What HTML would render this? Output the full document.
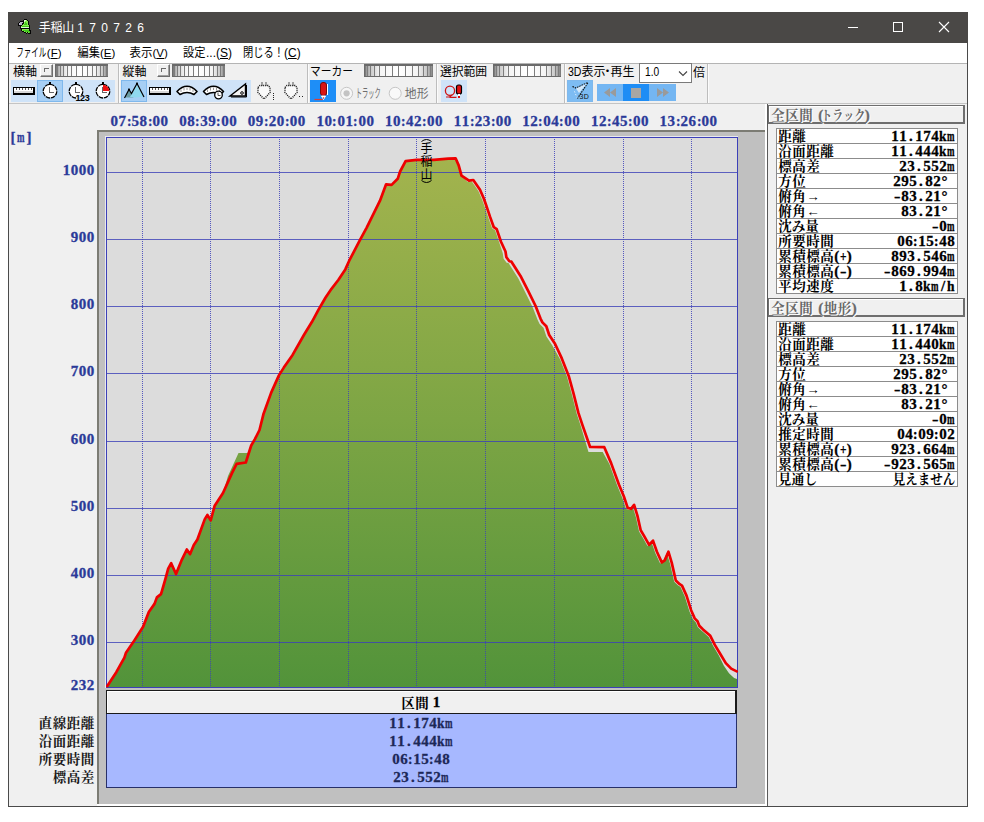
<!DOCTYPE html><html lang="ja"><head><meta charset="utf-8"><title>手稲山170726</title><style>
html,body{margin:0;padding:0;background:#fff}
body{width:984px;height:822px;position:relative;overflow:hidden;font-family:"Liberation Sans",sans-serif}
body>div{position:absolute}
.mono{white-space:nowrap;height:0;line-height:normal;-webkit-text-stroke:.3px}
.mono i{position:absolute;top:0;font-style:normal;display:block;transform-origin:0 0}
.lt{white-space:nowrap;line-height:normal}
svg.ov{position:absolute;left:0;top:0;pointer-events:none}
</style></head><body>
<div style="left:8px;top:12px;width:960px;height:795px;background:#f0f0f0;border:1px solid #4a4a4a;box-sizing:border-box"></div>
<div style="left:8px;top:12px;width:960px;height:31px;background:#4a4846"></div>
<div style="left:9px;top:43px;width:958px;height:20px;background:#fff"></div>
<div style="left:9px;top:63px;width:958px;height:41px;background:#f0f0f0;border-top:1px solid #b4b4b4;border-bottom:1px solid #c4c4c4;box-sizing:border-box"></div>
<div style="left:118px;top:64px;width:1px;height:39px;background:#bdbdbd"></div>
<div style="left:119px;top:64px;width:1px;height:39px;background:#fbfbfb"></div>
<div style="left:307px;top:64px;width:1px;height:39px;background:#bdbdbd"></div>
<div style="left:308px;top:64px;width:1px;height:39px;background:#fbfbfb"></div>
<div style="left:436px;top:64px;width:1px;height:39px;background:#bdbdbd"></div>
<div style="left:437px;top:64px;width:1px;height:39px;background:#fbfbfb"></div>
<div style="left:564px;top:64px;width:1px;height:39px;background:#bdbdbd"></div>
<div style="left:565px;top:64px;width:1px;height:39px;background:#fbfbfb"></div>
<div style="left:707px;top:64px;width:1px;height:39px;background:#bdbdbd"></div>
<div style="left:708px;top:64px;width:1px;height:39px;background:#fbfbfb"></div>
<div style="left:40px;top:64px;width:13px;height:13px;background:#f0f0f0;border:1px solid;border-color:#fff #6d6d6d #6d6d6d #fff;box-shadow:inset -1px -1px 0 #a0a0a0;box-sizing:border-box"></div>
<div style="left:55px;top:64px;width:53px;height:13px;background:linear-gradient(90deg,#8a8a8a 0,#c8c8c8 8%,#f4f4f4 22%,#fff 50%,#f4f4f4 78%,#c8c8c8 92%,#8a8a8a 100%);border:1px solid #6a6a6a;border-top:2px solid #6a6a6a;box-sizing:border-box"></div>
<div style="left:157px;top:64px;width:13px;height:13px;background:#f0f0f0;border:1px solid;border-color:#fff #6d6d6d #6d6d6d #fff;box-shadow:inset -1px -1px 0 #a0a0a0;box-sizing:border-box"></div>
<div style="left:172px;top:64px;width:53px;height:13px;background:linear-gradient(90deg,#8a8a8a 0,#c8c8c8 8%,#f4f4f4 22%,#fff 50%,#f4f4f4 78%,#c8c8c8 92%,#8a8a8a 100%);border:1px solid #6a6a6a;border-top:2px solid #6a6a6a;box-sizing:border-box"></div>
<div style="left:364px;top:64px;width:69px;height:13px;background:linear-gradient(90deg,#8a8a8a 0,#c8c8c8 8%,#f4f4f4 22%,#fff 50%,#f4f4f4 78%,#c8c8c8 92%,#8a8a8a 100%);border:1px solid #6a6a6a;border-top:2px solid #6a6a6a;box-sizing:border-box"></div>
<div style="left:493px;top:64px;width:68px;height:13px;background:linear-gradient(90deg,#8a8a8a 0,#c8c8c8 8%,#f4f4f4 22%,#fff 50%,#f4f4f4 78%,#c8c8c8 92%,#8a8a8a 100%);border:1px solid #6a6a6a;border-top:2px solid #6a6a6a;box-sizing:border-box"></div>
<div style="left:639px;top:63px;width:53px;height:20px;background:#fff;border:1px solid #7a7a7a;box-sizing:border-box"></div>
<div style="left:11px;top:80px;width:26px;height:22px;background:#cfe3f8;"></div>
<div style="left:37px;top:80px;width:26px;height:22px;background:#a6cff5;border:1px solid #7fb8ec;box-sizing:border-box;"></div>
<div style="left:63px;top:80px;width:26px;height:22px;background:#cfe3f8;"></div>
<div style="left:89px;top:80px;width:26px;height:22px;background:#cfe3f8;"></div>
<div style="left:121px;top:80px;width:26px;height:22px;background:#a6cff5;border:1px solid #7fb8ec;box-sizing:border-box;"></div>
<div style="left:147px;top:80px;width:26px;height:22px;background:#cfe3f8;"></div>
<div style="left:173px;top:80px;width:26px;height:22px;background:#cfe3f8;"></div>
<div style="left:199px;top:80px;width:26px;height:22px;background:#cfe3f8;"></div>
<div style="left:225px;top:80px;width:26px;height:22px;background:#cfe3f8;"></div>
<div style="left:310px;top:80px;width:26px;height:22px;background:#1e8ef7;"></div>
<div style="left:441px;top:80px;width:26px;height:22px;background:#cfe3f8;"></div>
<div style="left:567px;top:80px;width:26px;height:22px;background:#7dbcf3;border:1px solid #7fb8ec;box-sizing:border-box;"></div>
<div style="left:597px;top:84px;width:26px;height:17px;background:#74b6f2"></div>
<div style="left:623px;top:84px;width:26px;height:17px;background:#1e8df5"></div>
<div style="left:649px;top:84px;width:27px;height:17px;background:#74b6f2"></div>
<div style="left:97px;top:130px;width:668px;height:674px;background:#c0c0c0;border-left:2px solid #7c7c74;border-top:2px solid #7c7c74;box-sizing:border-box"></div>
<div style="left:765px;top:104px;width:2px;height:702px;background:#fff"></div>
<div style="left:767px;top:104px;width:1px;height:702px;background:#5a5a5a"></div>
<div style="left:97px;top:804px;width:668px;height:2px;background:#fff"></div>
<div style="left:105px;top:136px;width:633px;height:552px;background:#e9e9ef"></div>
<div style="left:106px;top:137px;width:632px;height:551px;background:#dcdcdc"></div>
<div style="left:106px;top:690px;width:631px;height:24px;background:#f0f0f0;border:1px solid #1a1a1a;border-right:2px solid #1a1a1a;box-sizing:border-box;box-shadow:inset 1px 1px 0 #fff"></div>
<div style="left:106px;top:714px;width:631px;height:74px;background:#a7b8ff;border:1px solid #27306a;border-top:none;box-sizing:border-box"></div>
<div style="left:768px;top:105px;width:197px;height:19px;border:1px solid #6e6e6e;border-right-width:2px;border-bottom-width:2px;box-sizing:border-box;box-shadow:inset 1px 1px 0 #fff"></div>
<div style="left:768px;top:298px;width:197px;height:19px;border:1px solid #6e6e6e;border-right-width:2px;border-bottom-width:2px;box-sizing:border-box;box-shadow:inset 1px 1px 0 #fff"></div>
<div style="left:776px;top:128px;width:182px;height:166px;background:#fff;border:1px solid #8c8c8c;box-sizing:border-box"></div>
<div style="left:777px;top:143px;width:180px;height:1px;background:#8c8c8c"></div>
<div style="left:777px;top:158px;width:180px;height:1px;background:#8c8c8c"></div>
<div style="left:777px;top:173px;width:180px;height:1px;background:#8c8c8c"></div>
<div style="left:777px;top:188px;width:180px;height:1px;background:#8c8c8c"></div>
<div style="left:777px;top:203px;width:180px;height:1px;background:#8c8c8c"></div>
<div style="left:777px;top:218px;width:180px;height:1px;background:#8c8c8c"></div>
<div style="left:777px;top:233px;width:180px;height:1px;background:#8c8c8c"></div>
<div style="left:777px;top:248px;width:180px;height:1px;background:#8c8c8c"></div>
<div style="left:777px;top:263px;width:180px;height:1px;background:#8c8c8c"></div>
<div style="left:777px;top:278px;width:180px;height:1px;background:#8c8c8c"></div>
<div style="left:776px;top:321px;width:182px;height:166px;background:#fff;border:1px solid #8c8c8c;box-sizing:border-box"></div>
<div style="left:777px;top:336px;width:180px;height:1px;background:#8c8c8c"></div>
<div style="left:777px;top:351px;width:180px;height:1px;background:#8c8c8c"></div>
<div style="left:777px;top:366px;width:180px;height:1px;background:#8c8c8c"></div>
<div style="left:777px;top:381px;width:180px;height:1px;background:#8c8c8c"></div>
<div style="left:777px;top:396px;width:180px;height:1px;background:#8c8c8c"></div>
<div style="left:777px;top:411px;width:180px;height:1px;background:#8c8c8c"></div>
<div style="left:777px;top:426px;width:180px;height:1px;background:#8c8c8c"></div>
<div style="left:777px;top:441px;width:180px;height:1px;background:#8c8c8c"></div>
<div style="left:777px;top:456px;width:180px;height:1px;background:#8c8c8c"></div>
<div style="left:777px;top:471px;width:180px;height:1px;background:#8c8c8c"></div>
<svg class="ov" width="984" height="822" viewBox="0 0 984 822"><g stroke="#fff" stroke-width="1" fill="none" shape-rendering="crispEdges"><path d="M848 27.5H858"/><rect x="893.5" y="22.5" width="9" height="9"/></g><path d="M939 22L949 32M949 22L939 32" stroke="#fff" stroke-width="1.1" fill="none"/>
<g shape-rendering="crispEdges"><rect x="24" y="19" width="1" height="1" fill="#050505"/><rect x="25" y="19" width="1" height="1" fill="#050505"/><rect x="26" y="19" width="1" height="1" fill="#050505"/><rect x="23" y="20" width="1" height="1" fill="#050505"/><rect x="24" y="20" width="1" height="1" fill="#dcffd0"/><rect x="25" y="20" width="1" height="1" fill="#dcffd0"/><rect x="26" y="20" width="1" height="1" fill="#86ec4c"/><rect x="27" y="20" width="1" height="1" fill="#050505"/><rect x="20" y="21" width="1" height="1" fill="#050505"/><rect x="21" y="21" width="1" height="1" fill="#050505"/><rect x="22" y="21" width="1" height="1" fill="#050505"/><rect x="23" y="21" width="1" height="1" fill="#050505"/><rect x="24" y="21" width="1" height="1" fill="#dcffd0"/><rect x="25" y="21" width="1" height="1" fill="#86ec4c"/><rect x="26" y="21" width="1" height="1" fill="#86ec4c"/><rect x="27" y="21" width="1" height="1" fill="#86ec4c"/><rect x="28" y="21" width="1" height="1" fill="#050505"/><rect x="19" y="22" width="1" height="1" fill="#050505"/><rect x="20" y="22" width="1" height="1" fill="#b9b4c8"/><rect x="21" y="22" width="1" height="1" fill="#b9b4c8"/><rect x="22" y="22" width="1" height="1" fill="#b9b4c8"/><rect x="23" y="22" width="1" height="1" fill="#050505"/><rect x="24" y="22" width="1" height="1" fill="#86ec4c"/><rect x="25" y="22" width="1" height="1" fill="#43c81e"/><rect x="26" y="22" width="1" height="1" fill="#86ec4c"/><rect x="27" y="22" width="1" height="1" fill="#86ec4c"/><rect x="28" y="22" width="1" height="1" fill="#050505"/><rect x="18" y="23" width="1" height="1" fill="#050505"/><rect x="19" y="23" width="1" height="1" fill="#b9b4c8"/><rect x="20" y="23" width="1" height="1" fill="#b9b4c8"/><rect x="21" y="23" width="1" height="1" fill="#b9b4c8"/><rect x="22" y="23" width="1" height="1" fill="#050505"/><rect x="23" y="23" width="1" height="1" fill="#050505"/><rect x="24" y="23" width="1" height="1" fill="#86ec4c"/><rect x="25" y="23" width="1" height="1" fill="#43c81e"/><rect x="26" y="23" width="1" height="1" fill="#43c81e"/><rect x="27" y="23" width="1" height="1" fill="#86ec4c"/><rect x="28" y="23" width="1" height="1" fill="#050505"/><rect x="18" y="24" width="1" height="1" fill="#050505"/><rect x="19" y="24" width="1" height="1" fill="#b9b4c8"/><rect x="20" y="24" width="1" height="1" fill="#b9b4c8"/><rect x="21" y="24" width="1" height="1" fill="#b9b4c8"/><rect x="22" y="24" width="1" height="1" fill="#050505"/><rect x="23" y="24" width="1" height="1" fill="#86ec4c"/><rect x="24" y="24" width="1" height="1" fill="#43c81e"/><rect x="25" y="24" width="1" height="1" fill="#43c81e"/><rect x="26" y="24" width="1" height="1" fill="#43c81e"/><rect x="27" y="24" width="1" height="1" fill="#86ec4c"/><rect x="28" y="24" width="1" height="1" fill="#050505"/><rect x="18" y="25" width="1" height="1" fill="#050505"/><rect x="19" y="25" width="1" height="1" fill="#050505"/><rect x="20" y="25" width="1" height="1" fill="#050505"/><rect x="21" y="25" width="1" height="1" fill="#050505"/><rect x="22" y="25" width="1" height="1" fill="#86ec4c"/><rect x="23" y="25" width="1" height="1" fill="#86ec4c"/><rect x="24" y="25" width="1" height="1" fill="#86ec4c"/><rect x="25" y="25" width="1" height="1" fill="#86ec4c"/><rect x="26" y="25" width="1" height="1" fill="#86ec4c"/><rect x="27" y="25" width="1" height="1" fill="#86ec4c"/><rect x="28" y="25" width="1" height="1" fill="#86ec4c"/><rect x="29" y="25" width="1" height="1" fill="#050505"/><rect x="20" y="26" width="1" height="1" fill="#050505"/><rect x="21" y="26" width="1" height="1" fill="#86ec4c"/><rect x="22" y="26" width="1" height="1" fill="#43c81e"/><rect x="23" y="26" width="1" height="1" fill="#43c81e"/><rect x="24" y="26" width="1" height="1" fill="#43c81e"/><rect x="25" y="26" width="1" height="1" fill="#43c81e"/><rect x="26" y="26" width="1" height="1" fill="#43c81e"/><rect x="27" y="26" width="1" height="1" fill="#43c81e"/><rect x="28" y="26" width="1" height="1" fill="#43c81e"/><rect x="29" y="26" width="1" height="1" fill="#050505"/><rect x="20" y="27" width="1" height="1" fill="#050505"/><rect x="21" y="27" width="1" height="1" fill="#dcffd0"/><rect x="22" y="27" width="1" height="1" fill="#dcffd0"/><rect x="23" y="27" width="1" height="1" fill="#dcffd0"/><rect x="24" y="27" width="1" height="1" fill="#dcffd0"/><rect x="25" y="27" width="1" height="1" fill="#dcffd0"/><rect x="26" y="27" width="1" height="1" fill="#dcffd0"/><rect x="27" y="27" width="1" height="1" fill="#dcffd0"/><rect x="28" y="27" width="1" height="1" fill="#dcffd0"/><rect x="29" y="27" width="1" height="1" fill="#050505"/><rect x="20" y="28" width="1" height="1" fill="#050505"/><rect x="21" y="28" width="1" height="1" fill="#050505"/><rect x="22" y="28" width="1" height="1" fill="#050505"/><rect x="23" y="28" width="1" height="1" fill="#050505"/><rect x="24" y="28" width="1" height="1" fill="#050505"/><rect x="25" y="28" width="1" height="1" fill="#050505"/><rect x="26" y="28" width="1" height="1" fill="#050505"/><rect x="27" y="28" width="1" height="1" fill="#050505"/><rect x="28" y="28" width="1" height="1" fill="#050505"/><rect x="29" y="28" width="1" height="1" fill="#050505"/><rect x="21" y="29" width="1" height="1" fill="#050505"/><rect x="22" y="29" width="1" height="1" fill="#86ec4c"/><rect x="23" y="29" width="1" height="1" fill="#86ec4c"/><rect x="24" y="29" width="1" height="1" fill="#86ec4c"/><rect x="25" y="29" width="1" height="1" fill="#86ec4c"/><rect x="26" y="29" width="1" height="1" fill="#86ec4c"/><rect x="27" y="29" width="1" height="1" fill="#86ec4c"/><rect x="28" y="29" width="1" height="1" fill="#86ec4c"/><rect x="29" y="29" width="1" height="1" fill="#050505"/><rect x="21" y="30" width="1" height="1" fill="#050505"/><rect x="22" y="30" width="1" height="1" fill="#86ec4c"/><rect x="23" y="30" width="1" height="1" fill="#43c81e"/><rect x="24" y="30" width="1" height="1" fill="#43c81e"/><rect x="25" y="30" width="1" height="1" fill="#43c81e"/><rect x="26" y="30" width="1" height="1" fill="#43c81e"/><rect x="27" y="30" width="1" height="1" fill="#43c81e"/><rect x="28" y="30" width="1" height="1" fill="#43c81e"/><rect x="29" y="30" width="1" height="1" fill="#050505"/><rect x="30" y="30" width="1" height="1" fill="#050505"/><rect x="22" y="31" width="1" height="1" fill="#050505"/><rect x="23" y="31" width="1" height="1" fill="#050505"/><rect x="24" y="31" width="1" height="1" fill="#86ec4c"/><rect x="25" y="31" width="1" height="1" fill="#43c81e"/><rect x="26" y="31" width="1" height="1" fill="#43c81e"/><rect x="27" y="31" width="1" height="1" fill="#43c81e"/><rect x="28" y="31" width="1" height="1" fill="#43c81e"/><rect x="29" y="31" width="1" height="1" fill="#43c81e"/><rect x="30" y="31" width="1" height="1" fill="#050505"/><rect x="24" y="32" width="1" height="1" fill="#050505"/><rect x="25" y="32" width="1" height="1" fill="#050505"/><rect x="26" y="32" width="1" height="1" fill="#86ec4c"/><rect x="27" y="32" width="1" height="1" fill="#050505"/><rect x="28" y="32" width="1" height="1" fill="#86ec4c"/><rect x="29" y="32" width="1" height="1" fill="#43c81e"/><rect x="30" y="32" width="1" height="1" fill="#050505"/><rect x="26" y="33" width="1" height="1" fill="#050505"/><rect x="28" y="33" width="1" height="1" fill="#050505"/><rect x="29" y="33" width="1" height="1" fill="#050505"/><rect x="30" y="33" width="1" height="1" fill="#050505"/></g>
<path d="M44.5 72V68.5H49" stroke="#6a6a6a" fill="none" shape-rendering="crispEdges"/>
<path d="M56.5 66V76M57.5 66V76M60.5 66V76M63.5 66V76M67.5 66V76M71.5 66V76M76.5 66V76M82.5 66V76M87.5 66V76M92.5 66V76M96.5 66V76M100.5 66V76M103.5 66V76M106.5 66V76M107.5 66V76" stroke="#7d7d7d" stroke-width="1" fill="none" shape-rendering="crispEdges"/>
<path d="M161.5 72V68.5H166" stroke="#6a6a6a" fill="none" shape-rendering="crispEdges"/>
<path d="M173.5 66V76M174.5 66V76M177.5 66V76M180.5 66V76M184.5 66V76M188.5 66V76M193.5 66V76M198.5 66V76M204.5 66V76M209.5 66V76M213.5 66V76M217.5 66V76M220.5 66V76M223.5 66V76M224.5 66V76" stroke="#7d7d7d" stroke-width="1" fill="none" shape-rendering="crispEdges"/>
<path d="M365.5 66V76M367.5 66V76M370.5 66V76M374.5 66V76M379.5 66V76M385.5 66V76M392.5 66V76M398.5 66V76M405.5 66V76M412.5 66V76M418.5 66V76M423.5 66V76M427.5 66V76M430.5 66V76M432.5 66V76" stroke="#7d7d7d" stroke-width="1" fill="none" shape-rendering="crispEdges"/>
<path d="M494.5 66V76M496.5 66V76M499.5 66V76M503.5 66V76M508.5 66V76M514.5 66V76M520.5 66V76M527.5 66V76M534.5 66V76M540.5 66V76M546.5 66V76M551.5 66V76M555.5 66V76M558.5 66V76M560.5 66V76" stroke="#7d7d7d" stroke-width="1" fill="none" shape-rendering="crispEdges"/>
<path d="M679 71.5L683 75.5L687 71.5" stroke="#444" stroke-width="1.1" fill="none"/>
<g shape-rendering="crispEdges"><rect x="13" y="87" width="22" height="8" fill="#000"/><rect x="14" y="88" width="19" height="3" fill="#fff"/><rect x="14" y="91" width="19" height="2" fill="#d8d8d8"/><path d="M16.5 88V90M19.5 88V90M22.5 88V90M25.5 88V90M28.5 88V90M31.5 88V90" stroke="#555" stroke-width="1"/></g><circle cx="50" cy="91.2" r="6.8" fill="#fff" stroke="#000" stroke-width="1.3" stroke-dasharray="4.5 0.8"/><rect x="49" y="81.9" width="2" height="3" fill="#000" shape-rendering="crispEdges"/><path d="M49.5 87.2V92.7H53.5" stroke="#666" stroke-width="1" fill="none" shape-rendering="crispEdges"/><circle cx="76" cy="91.2" r="6.8" fill="#fff" stroke="#000" stroke-width="1.3" stroke-dasharray="4.5 0.8"/><rect x="75" y="81.9" width="2" height="3" fill="#000" shape-rendering="crispEdges"/><path d="M75.5 87.2V92.7H79.5" stroke="#666" stroke-width="1" fill="none" shape-rendering="crispEdges"/><rect x="76" y="95" width="12" height="6" fill="#cfe3f8"/><circle cx="103" cy="91.2" r="6.8" fill="#fff" stroke="#000" stroke-width="1.3" stroke-dasharray="4.5 0.8"/><rect x="102" y="81.9" width="2" height="3" fill="#000" shape-rendering="crispEdges"/><path d="M102.5 87.2V92.7H106.5" stroke="#666" stroke-width="1" fill="none" shape-rendering="crispEdges"/><path d="M103 91V84.8A6.2 6.2 0 0 1 109.2 91Z" fill="#ee1010"/><path d="M125 97.5L129 90L131.5 94L125 97.5Z" fill="#6a9ba3"/><path d="M125.5 97.5L129 90.5L131.5 94L133.5 97.5Z" fill="#6a9ba3"/><path d="M130 97L137 84.5L143.5 96.5L136 97.5Z" fill="#90d9ee"/><path d="M124.5 98L129 89.5L131.5 93.5L137 83.5L144 97" stroke="#000" stroke-width="1.2" fill="none"/><circle cx="129" cy="89.6" r="1" fill="#000"/><circle cx="137" cy="83.6" r="1" fill="#000"/><g shape-rendering="crispEdges"><rect x="149" y="87" width="22" height="8" fill="#000"/><rect x="150" y="88" width="19" height="3" fill="#fff"/><rect x="150" y="91" width="19" height="2" fill="#d8d8d8"/><path d="M152.5 88V90M155.5 88V90M158.5 88V90M161.5 88V90M164.5 88V90M167.5 88V90" stroke="#555" stroke-width="1"/></g><path d="M177 91.5Q187 81 197 91.5L194 94.5Q187 90.5 180 94.5Z" fill="#fff" stroke="#000" stroke-width="1.6" stroke-linejoin="round"/><path d="M181 89.5v2.5M184 88v2.5M187 87.5v2.5M190 88v2.5M193 89.5v2.5" stroke="#999" stroke-width="1"/><path d="M203.5 91.5Q213.5 81 223.5 91.5L220.5 94.5Q213.5 90.5 206.5 94.5Z" fill="#fff" stroke="#000" stroke-width="1.6" stroke-linejoin="round"/><path d="M207.5 89.5v2.5M210.5 88v2.5M213.5 87.5v2.5M216.5 88v2.5M219.5 89.5v2.5" stroke="#999" stroke-width="1"/><circle cx="218.5" cy="95" r="3.8" fill="#fff" stroke="#000" stroke-width="1.3"/><path d="M218 92.5V95.5H220.5" stroke="#555" stroke-width="1" fill="none"/><path d="M230 96L245.5 96L245.5 84Z" fill="#f4f4f4" stroke="#000" stroke-width="1.4" stroke-linejoin="miter"/><path d="M231 97H246.5V85" stroke="#000" stroke-width="1" fill="none"/><circle cx="242" cy="93" r="1.3" fill="#fff" stroke="#000" stroke-width="1"/><path d="M258 87.5L260 85.5L268 85.5L270 87.5L270 92.5L264 99L258 92.5Z M262 82.5v3M266 82.5v3" fill="#fafafa" stroke="#111" stroke-width="1.4" stroke-dasharray="1 1"/><path d="M285 87.5L287 85.5L295 85.5L297 87.5L297 92.5L291 99L285 92.5Z M289 82.5v3M293 82.5v3" fill="#fafafa" stroke="#111" stroke-width="1.4" stroke-dasharray="1 1"/><path d="M273.5 93V100M299.5 96v1M302.5 96v1" stroke="#222" stroke-width="1" stroke-dasharray="1 1"/><rect x="320.5" y="82.5" width="6" height="13" rx="2.5" fill="#d81414" stroke="#7a0a0a" stroke-width="1"/><path d="M327.5 84V95" stroke="#fff" stroke-width="1"/><path d="M321.5 96L323.5 99.5L325.5 96Z" fill="#fff" stroke="#fff" stroke-width="1"/><circle cx="323.5" cy="98" r=".8" fill="#d81414"/><path d="M314.5 99.5H322.5" stroke="#e23b2e" stroke-width="1.2"/><circle cx="346.6" cy="93.3" r="6" fill="#f6f6f6" stroke="#c6c6c6" stroke-width="1"/><circle cx="346.6" cy="93.3" r="3.1" fill="#c3c3c3"/><circle cx="395.2" cy="93.3" r="6" fill="#f9f9f9" stroke="#c6c6c6" stroke-width="1"/><circle cx="450" cy="90.7" r="4.6" fill="none" stroke="#cf1414" stroke-width="1.3"/><path d="M446 97H449.5L452 95M449.5 97.3H456.5" stroke="#cf1414" stroke-width="1.2" fill="none"/><rect x="456.5" y="85" width="5" height="9" rx="2" fill="#e01010" stroke="#000" stroke-width="1.2"/><rect x="458" y="94" width="2" height="2" fill="#fff"/><rect x="458" y="96" width="2" height="2" fill="#e01010"/><path d="M572.5 86.5L576 88L588 82.5L577.5 98.5" stroke="#111" stroke-width="1.2" fill="none" stroke-dasharray="1.5 1"/><path d="M576 88.5L587 83.5L579 93Z" fill="#d4e8fa"/><path d="M574.5 91.5L577 97.5" stroke="#fff" stroke-width="1" stroke-dasharray="1 2"/><path d="M604 92.5L610 88V97ZM610 92.5L616 88V97Z" fill="#9a9a9a"/><rect x="631" y="88" width="10" height="10" fill="#a9a6a3"/><path d="M669 92.5L663 88V97ZM663 92.5L657 88V97Z" fill="#9a9a9a"/>
<defs><linearGradient id="gg" x1="0" y1="150" x2="0" y2="688" gradientUnits="userSpaceOnUse"><stop offset="0" stop-color="#a4b44e"/><stop offset=".5" stop-color="#7da544"/><stop offset="1" stop-color="#52933a"/></linearGradient></defs><polygon points="107.0,687.0 107.3,686.0 116.3,672.2 124.4,657.6 126.0,652.7 133.3,642.1 143.1,626.7 148.8,612.0 154.5,603.9 156.9,597.4 161.0,594.1 163.4,586.0 165.5,578.7 168.2,568.7 171.2,563.2 176.0,574.0 181.9,559.6 186.8,549.5 190.1,554.1 193.8,545.0 197.4,539.5 204.7,519.4 207.4,514.9 210.7,520.3 214.7,505.7 223.0,493.0 228.0,476.0 238.5,453.0 247.6,453.0 250.5,447.0 251.2,445.5 254.9,439.1 259.5,430.0 263.4,414.3 271.1,392.9 278.9,375.4 283.8,367.6 292.6,354.9 304.2,334.5 312.0,321.8 318.8,309.2 325.6,297.5 331.5,288.8 338.3,280.0 345.3,269.4 349.2,260.7 359.9,240.2 366.7,227.6 380.0,200.7 386.1,184.3 391.6,184.9 397.7,178.8 400.1,171.5 405.6,161.1 416.6,159.9 433.7,159.9 448.3,158.7 455.6,158.3 458.7,165.4 461.5,175.7 467.4,181.8 471.7,181.2 478.4,191.0 482.1,199.5 484.4,206.0 488.3,217.6 492.2,228.4 495.1,230.3 499.4,243.0 502.7,253.0 503.6,258.8 506.6,262.7 508.5,263.1 518.2,278.3 525.1,291.9 532.8,307.5 537.7,320.1 539.6,323.9 543.5,327.8 546.4,336.5 552.2,345.3 560.2,359.6 567.1,377.1 571.9,394.6 576.8,414.1 580.7,425.8 588.5,452.0 602.7,452.0 609.5,464.3 617.3,485.7 622.2,497.4 626.1,509.1 629.4,510.0 632.5,506.1 635.8,516.8 639.1,531.4 642.6,537.3 647.5,546.0 651.4,541.8 655.3,552.9 660.2,563.6 663.1,561.6 666.8,552.9 670.1,563.8 674.2,581.7 678.1,585.4 680.4,586.8 684.9,596.8 689.5,611.4 693.1,619.6 695.9,622.4 697.7,626.9 701.4,630.6 708.7,637.0 713.2,646.1 718.7,655.2 723.9,665.7 729.0,673.2 734.1,678.0 737.0,679.0 737.0,687.0" fill="url(#gg)"/><path d="M106 172.5H738M106 239.5H738M106 306.5H738M106 373.5H738M106 441.5H738M106 508.5H738M106 575.5H738M106 642.5H738" stroke="#3c40b8" stroke-width="1" fill="none" stroke-opacity=".8" shape-rendering="crispEdges"/><path d="M142.5 137V687M210.5 137V687M279.5 137V687M348.5 137V687M416.5 137V687M485.5 137V687M554.5 137V687M623.5 137V687M691.5 137V687" stroke="#3c40b8" stroke-width="1" stroke-dasharray="1 1" fill="none" stroke-opacity=".85" shape-rendering="crispEdges"/><rect x="106.5" y="137.5" width="631" height="550" fill="none" stroke="#3c40b8" stroke-width="1" shape-rendering="crispEdges"/><polyline points="107.3,686.0 116.3,672.2 124.4,657.6 126.0,652.7 133.3,642.1 143.1,626.7 148.8,612.0 154.5,603.9 156.9,597.4 161.0,594.1 163.4,586.0 165.5,578.7 168.2,568.7 171.2,563.2 176.0,574.0 181.9,559.6 186.8,549.5 190.1,554.1 193.8,545.0 197.4,539.5 204.7,519.4 207.4,514.9 210.7,520.3 214.7,505.7 223.0,493.0 232.1,472.9 236.6,463.8 245.8,462.5 251.2,445.5 254.9,439.1 259.5,430.0 263.4,414.3 271.1,392.9 278.9,375.4 283.8,367.6 292.6,354.9 304.2,334.5 312.0,321.8 318.8,309.2 325.6,297.5 331.5,288.8 338.3,280.0 345.3,269.4 349.2,260.7 359.9,240.2 366.7,227.6 380.0,200.7 386.1,184.3 391.6,184.9 397.7,178.8 400.1,171.5 405.6,161.1 416.6,159.9 433.7,159.9 448.3,158.7 455.6,158.3 458.7,165.4 461.5,175.7 469.0,180.6 473.3,180.0 480.0,189.8 483.7,198.3 486.0,204.8 489.9,216.4 493.8,227.2 496.7,229.1 501.0,241.8 505.5,251.5 506.4,257.3 509.4,261.2 511.3,261.6 521.0,276.8 527.9,290.4 535.6,306.0 540.5,318.6 542.4,322.4 546.3,326.3 549.2,335.0 555.0,343.8 561.8,358.4 568.7,375.9 573.5,393.4 578.4,412.9 582.3,424.6 590.1,447.0 604.3,447.2 611.1,463.1 618.9,484.5 623.8,496.2 627.7,507.9 631.0,508.8 634.1,504.9 637.4,515.6 640.7,530.2 644.2,536.1 649.1,544.8 653.0,540.6 656.9,551.7 661.8,562.4 664.7,560.4 668.4,551.7 671.7,562.6 675.8,580.5 679.7,584.2 682.0,585.6 686.5,595.6 691.1,610.2 694.7,618.4 697.5,621.2 699.3,625.7 703.0,629.4 710.3,635.8 714.8,644.9 720.3,654.0 725.8,663.1 731.2,668.6 736.7,671.4" fill="none" stroke="#ee0000" stroke-width="2.7" stroke-linejoin="round" stroke-linecap="round"/>
<path d="M421.5 141.5Q426.5 137.5 431.5 141.5M421.5 180.5Q426.5 184.5 431.5 180.5" stroke="#000" stroke-width="1" fill="none"/></svg>
<svg class="ov" width="984" height="822" viewBox="0 0 984 822">
<g font-family="'Liberation Sans','Noto Sans CJK JP',sans-serif" font-size="12">
<text x="38.85" y="31.5" fill="#fff" textLength="35.4" lengthAdjust="spacing">手稲山</text>
<g fill="#000">
<text x="16.3" y="57" textLength="30" lengthAdjust="spacingAndGlyphs">ファイル</text>
<text x="77.5" y="57" textLength="22.5" lengthAdjust="spacingAndGlyphs">編集</text>
<text x="129.5" y="57" textLength="23" lengthAdjust="spacingAndGlyphs">表示</text>
<text x="183" y="57" textLength="22.5" lengthAdjust="spacingAndGlyphs">設定</text>
<text x="243" y="57" textLength="41" lengthAdjust="spacingAndGlyphs">閉じる！</text>
<text x="13" y="75.5">横軸</text>
<text x="122.5" y="75.5">縦軸</text>
<text x="310" y="75.5" textLength="43" lengthAdjust="spacingAndGlyphs">マーカー</text>
<text x="439.9" y="75.5" textLength="47.2" lengthAdjust="spacingAndGlyphs">選択範囲</text>
<text x="581.5" y="75.5">表示</text>
<text x="601.5" y="75.5">・</text>
<text x="610.5" y="75.5">再生</text>
<text x="693" y="76.5">倍</text>
<text x="420.5" y="153">手</text>
<text x="420.5" y="165.7">稲</text>
<text x="420.5" y="178.5">山</text>
</g>
<g fill="#6d6d6d">
<text x="355.8" y="98" textLength="25" lengthAdjust="spacingAndGlyphs">トラック</text>
<text x="404.85" y="98" textLength="23.7" lengthAdjust="spacingAndGlyphs">地形</text>
</g>
</g>
<g font-family="'Liberation Serif','Noto Serif CJK JP','Noto Sans CJK JP',serif" font-size="13.5" font-weight="bold" letter-spacing="0.5">
<text x="401.25" y="707.5" fill="#000">区間</text>
<g fill="#1a1a1a">
<text x="38.75" y="727.5">直線距離</text>
<text x="38.75" y="745.5">沿面距離</text>
<text x="38.75" y="763.5">所要時間</text>
<text x="52.75" y="781.5">標高差</text>
</g>
<g fill="#fff">
<text x="772.25" y="121.3">全区間</text>
<text x="822.25" y="121.3" letter-spacing="0" textLength="44" lengthAdjust="spacingAndGlyphs">トラック</text>
<text x="772.25" y="314.3">全区間</text>
<text x="824.75" y="314.3">地形</text>
</g>
<g fill="#686868">
<text x="771.25" y="120.3">全区間</text>
<text x="821.25" y="120.3" letter-spacing="0" textLength="44" lengthAdjust="spacingAndGlyphs">トラック</text>
<text x="771.25" y="313.3">全区間</text>
<text x="823.75" y="313.3">地形</text>
</g>
<g fill="#000">
<text x="778.25" y="141.3">距離</text>
<text x="778.25" y="156.3">沿面距離</text>
<text x="778.25" y="171.3">標高差</text>
<text x="778.25" y="186.3">方位</text>
<text x="778.25" y="201.3">俯角→</text>
<text x="778.25" y="216.3">俯角←</text>
<text x="778.25" y="231.3" letter-spacing="0">沈み量</text>
<text x="778.25" y="246.3">所要時間</text>
<text x="778.25" y="261.3">累積標高</text>
<text x="778.25" y="276.3">累積標高</text>
<text x="778.25" y="291.3">平均速度</text>
<text x="778.25" y="334.3">距離</text>
<text x="778.25" y="349.3">沿面距離</text>
<text x="778.25" y="364.3">標高差</text>
<text x="778.25" y="379.3">方位</text>
<text x="778.25" y="394.3">俯角→</text>
<text x="778.25" y="409.3">俯角←</text>
<text x="778.25" y="424.3" letter-spacing="0">沈み量</text>
<text x="778.25" y="439.3">推定時間</text>
<text x="778.25" y="454.3">累積標高</text>
<text x="778.25" y="469.3">累積標高</text>
<text x="778.25" y="484.3" letter-spacing="0" textLength="39" lengthAdjust="spacingAndGlyphs">見通し</text>
<text x="892.75" y="484.3" letter-spacing="0" textLength="62.5" lengthAdjust="spacingAndGlyphs">見えません</text>
</g>
</g>
</svg>
<div class="lt" style="left:77.20px;top:20.64px;color:#fff;font:normal 12px 'Liberation Sans',sans-serif;">1</div>
<div class="lt" style="left:89.20px;top:20.64px;color:#fff;font:normal 12px 'Liberation Sans',sans-serif;">7</div>
<div class="lt" style="left:101.20px;top:20.64px;color:#fff;font:normal 12px 'Liberation Sans',sans-serif;">0</div>
<div class="lt" style="left:113.20px;top:20.64px;color:#fff;font:normal 12px 'Liberation Sans',sans-serif;">7</div>
<div class="lt" style="left:125.20px;top:20.64px;color:#fff;font:normal 12px 'Liberation Sans',sans-serif;">2</div>
<div class="lt" style="left:137.20px;top:20.64px;color:#fff;font:normal 12px 'Liberation Sans',sans-serif;">6</div>
<div class="lt" style="left:46.80px;top:46.59px;color:#000;font:normal 11.5px 'Liberation Sans',sans-serif;">(<u>F</u>)</div>
<div class="lt" style="left:100.00px;top:46.59px;color:#000;font:normal 11.5px 'Liberation Sans',sans-serif;">(<u>E</u>)</div>
<div class="lt" style="left:152.50px;top:46.59px;color:#000;font:normal 11.5px 'Liberation Sans',sans-serif;">(<u>V</u>)</div>
<div class="lt" style="left:206.00px;top:46.14px;color:#000;font:normal 12px 'Liberation Sans',sans-serif;">...(<u>S</u>)</div>
<div class="lt" style="left:284.00px;top:46.14px;color:#000;font:normal 12px 'Liberation Sans',sans-serif;">(<u>C</u>)</div>
<div class="lt" style="left:567.50px;top:64.64px;color:#000;font:normal 12px 'Liberation Sans',sans-serif;transform:scaleX(.88);transform-origin:left;">3D</div>
<div class="lt" style="left:644.50px;top:65.14px;color:#000;font:normal 12px 'Liberation Sans',sans-serif;transform:scaleX(.85);transform-origin:left;">1.0</div>
<div class="lt" style="left:75.5px;top:92.6px;font:bold 9px 'Liberation Sans',sans-serif;color:#000;letter-spacing:-0.4px">123</div>
<div class="lt" style="left:579.5px;top:93px;font:7px 'Liberation Sans',sans-serif;color:#111;letter-spacing:0.3px">3D</div>
<div class="mono" style="left:62.50px;top:161.63px;color:#2b3a99;font:bold 15px 'Liberation Serif',serif;width:32px"><i style="left:0.25px;">1</i><i style="left:8.25px;">0</i><i style="left:16.25px;">0</i><i style="left:24.25px;">0</i></div>
<div class="mono" style="left:70.50px;top:228.63px;color:#2b3a99;font:bold 15px 'Liberation Serif',serif;width:24px"><i style="left:0.25px;">9</i><i style="left:8.25px;">0</i><i style="left:16.25px;">0</i></div>
<div class="mono" style="left:70.50px;top:295.63px;color:#2b3a99;font:bold 15px 'Liberation Serif',serif;width:24px"><i style="left:0.25px;">8</i><i style="left:8.25px;">0</i><i style="left:16.25px;">0</i></div>
<div class="mono" style="left:70.50px;top:362.63px;color:#2b3a99;font:bold 15px 'Liberation Serif',serif;width:24px"><i style="left:0.25px;">7</i><i style="left:8.25px;">0</i><i style="left:16.25px;">0</i></div>
<div class="mono" style="left:70.50px;top:430.63px;color:#2b3a99;font:bold 15px 'Liberation Serif',serif;width:24px"><i style="left:0.25px;">6</i><i style="left:8.25px;">0</i><i style="left:16.25px;">0</i></div>
<div class="mono" style="left:70.50px;top:497.63px;color:#2b3a99;font:bold 15px 'Liberation Serif',serif;width:24px"><i style="left:0.25px;">5</i><i style="left:8.25px;">0</i><i style="left:16.25px;">0</i></div>
<div class="mono" style="left:70.50px;top:564.63px;color:#2b3a99;font:bold 15px 'Liberation Serif',serif;width:24px"><i style="left:0.25px;">4</i><i style="left:8.25px;">0</i><i style="left:16.25px;">0</i></div>
<div class="mono" style="left:70.50px;top:631.63px;color:#2b3a99;font:bold 15px 'Liberation Serif',serif;width:24px"><i style="left:0.25px;">3</i><i style="left:8.25px;">0</i><i style="left:16.25px;">0</i></div>
<div class="mono" style="left:70.50px;top:677.13px;color:#2b3a99;font:bold 15px 'Liberation Serif',serif;width:24px"><i style="left:0.25px;">2</i><i style="left:8.25px;">3</i><i style="left:16.25px;">2</i></div>
<div class="mono" style="left:9.00px;top:128.63px;color:#2b3a99;font:bold 15px 'Liberation Serif',serif;width:24px"><i style="left:1.50px;">[</i><i style="left:8.25px;transform:scaleX(0.600);">m</i><i style="left:17.50px;">]</i></div>
<div class="mono" style="left:110.30px;top:113.14px;color:#2b3a99;font:bold 15px 'Liberation Serif',serif;width:58px"><i style="left:0.25px;">0</i><i style="left:8.25px;">7</i><i style="left:16.25px;transform:scaleX(0.901);">:</i><i style="left:21.25px;">5</i><i style="left:29.25px;">8</i><i style="left:37.25px;transform:scaleX(0.901);">:</i><i style="left:42.25px;">0</i><i style="left:50.25px;">0</i></div>
<div class="mono" style="left:178.92px;top:113.14px;color:#2b3a99;font:bold 15px 'Liberation Serif',serif;width:58px"><i style="left:0.25px;">0</i><i style="left:8.25px;">8</i><i style="left:16.25px;transform:scaleX(0.901);">:</i><i style="left:21.25px;">3</i><i style="left:29.25px;">9</i><i style="left:37.25px;transform:scaleX(0.901);">:</i><i style="left:42.25px;">0</i><i style="left:50.25px;">0</i></div>
<div class="mono" style="left:247.54px;top:113.14px;color:#2b3a99;font:bold 15px 'Liberation Serif',serif;width:58px"><i style="left:0.25px;">0</i><i style="left:8.25px;">9</i><i style="left:16.25px;transform:scaleX(0.901);">:</i><i style="left:21.25px;">2</i><i style="left:29.25px;">0</i><i style="left:37.25px;transform:scaleX(0.901);">:</i><i style="left:42.25px;">0</i><i style="left:50.25px;">0</i></div>
<div class="mono" style="left:316.16px;top:113.14px;color:#2b3a99;font:bold 15px 'Liberation Serif',serif;width:58px"><i style="left:0.25px;">1</i><i style="left:8.25px;">0</i><i style="left:16.25px;transform:scaleX(0.901);">:</i><i style="left:21.25px;">0</i><i style="left:29.25px;">1</i><i style="left:37.25px;transform:scaleX(0.901);">:</i><i style="left:42.25px;">0</i><i style="left:50.25px;">0</i></div>
<div class="mono" style="left:384.78px;top:113.14px;color:#2b3a99;font:bold 15px 'Liberation Serif',serif;width:58px"><i style="left:0.25px;">1</i><i style="left:8.25px;">0</i><i style="left:16.25px;transform:scaleX(0.901);">:</i><i style="left:21.25px;">4</i><i style="left:29.25px;">2</i><i style="left:37.25px;transform:scaleX(0.901);">:</i><i style="left:42.25px;">0</i><i style="left:50.25px;">0</i></div>
<div class="mono" style="left:453.40px;top:113.14px;color:#2b3a99;font:bold 15px 'Liberation Serif',serif;width:58px"><i style="left:0.25px;">1</i><i style="left:8.25px;">1</i><i style="left:16.25px;transform:scaleX(0.901);">:</i><i style="left:21.25px;">2</i><i style="left:29.25px;">3</i><i style="left:37.25px;transform:scaleX(0.901);">:</i><i style="left:42.25px;">0</i><i style="left:50.25px;">0</i></div>
<div class="mono" style="left:522.02px;top:113.14px;color:#2b3a99;font:bold 15px 'Liberation Serif',serif;width:58px"><i style="left:0.25px;">1</i><i style="left:8.25px;">2</i><i style="left:16.25px;transform:scaleX(0.901);">:</i><i style="left:21.25px;">0</i><i style="left:29.25px;">4</i><i style="left:37.25px;transform:scaleX(0.901);">:</i><i style="left:42.25px;">0</i><i style="left:50.25px;">0</i></div>
<div class="mono" style="left:590.64px;top:113.14px;color:#2b3a99;font:bold 15px 'Liberation Serif',serif;width:58px"><i style="left:0.25px;">1</i><i style="left:8.25px;">2</i><i style="left:16.25px;transform:scaleX(0.901);">:</i><i style="left:21.25px;">4</i><i style="left:29.25px;">5</i><i style="left:37.25px;transform:scaleX(0.901);">:</i><i style="left:42.25px;">0</i><i style="left:50.25px;">0</i></div>
<div class="mono" style="left:659.26px;top:113.14px;color:#2b3a99;font:bold 15px 'Liberation Serif',serif;width:58px"><i style="left:0.25px;">1</i><i style="left:8.25px;">3</i><i style="left:16.25px;transform:scaleX(0.901);">:</i><i style="left:21.25px;">2</i><i style="left:29.25px;">6</i><i style="left:37.25px;transform:scaleX(0.901);">:</i><i style="left:42.25px;">0</i><i style="left:50.25px;">0</i></div>
<div class="mono" style="left:432.50px;top:694.13px;color:#000;font:bold 15px 'Liberation Serif',serif;width:8px"><i style="left:0.25px;">1</i></div>
<div class="mono" style="left:389.00px;top:715.43px;color:#1d2858;font:bold 15px 'Liberation Serif',serif;width:64px"><i style="left:0.25px;">1</i><i style="left:8.25px;">1</i><i style="left:18.12px;">.</i><i style="left:24.25px;">1</i><i style="left:32.25px;">7</i><i style="left:40.25px;">4</i><i style="left:48.25px;transform:scaleX(0.899);">k</i><i style="left:56.25px;transform:scaleX(0.600);">m</i></div>
<div class="mono" style="left:389.00px;top:733.43px;color:#1d2858;font:bold 15px 'Liberation Serif',serif;width:64px"><i style="left:0.25px;">1</i><i style="left:8.25px;">1</i><i style="left:18.12px;">.</i><i style="left:24.25px;">4</i><i style="left:32.25px;">4</i><i style="left:40.25px;">4</i><i style="left:48.25px;transform:scaleX(0.899);">k</i><i style="left:56.25px;transform:scaleX(0.600);">m</i></div>
<div class="mono" style="left:392.00px;top:751.43px;color:#1d2858;font:bold 15px 'Liberation Serif',serif;width:58px"><i style="left:0.25px;">0</i><i style="left:8.25px;">6</i><i style="left:16.25px;transform:scaleX(0.901);">:</i><i style="left:21.25px;">1</i><i style="left:29.25px;">5</i><i style="left:37.25px;transform:scaleX(0.901);">:</i><i style="left:42.25px;">4</i><i style="left:50.25px;">8</i></div>
<div class="mono" style="left:393.00px;top:769.43px;color:#1d2858;font:bold 15px 'Liberation Serif',serif;width:56px"><i style="left:0.25px;">2</i><i style="left:8.25px;">3</i><i style="left:18.12px;">.</i><i style="left:24.25px;">5</i><i style="left:32.25px;">5</i><i style="left:40.25px;">2</i><i style="left:48.25px;transform:scaleX(0.600);">m</i></div>
<div class="mono" style="left:819.00px;top:107.64px;color:#fff;font:bold 15px 'Liberation Serif',serif;width:5.5px"><i style="left:0.25px;">(</i></div>
<div class="mono" style="left:865.50px;top:107.64px;color:#fff;font:bold 15px 'Liberation Serif',serif;width:5.5px"><i style="left:0.25px;">)</i></div>
<div class="mono" style="left:818.00px;top:106.64px;color:#686868;font:bold 15px 'Liberation Serif',serif;width:5.5px"><i style="left:0.25px;">(</i></div>
<div class="mono" style="left:864.50px;top:106.64px;color:#686868;font:bold 15px 'Liberation Serif',serif;width:5.5px"><i style="left:0.25px;">)</i></div>
<div class="mono" style="left:819.00px;top:300.63px;color:#fff;font:bold 15px 'Liberation Serif',serif;width:5.5px"><i style="left:0.25px;">(</i></div>
<div class="mono" style="left:852.50px;top:300.63px;color:#fff;font:bold 15px 'Liberation Serif',serif;width:5.5px"><i style="left:0.25px;">)</i></div>
<div class="mono" style="left:818.00px;top:299.63px;color:#686868;font:bold 15px 'Liberation Serif',serif;width:5.5px"><i style="left:0.25px;">(</i></div>
<div class="mono" style="left:851.50px;top:299.63px;color:#686868;font:bold 15px 'Liberation Serif',serif;width:5.5px"><i style="left:0.25px;">)</i></div>
<div class="mono" style="left:891.00px;top:127.64px;color:#000;font:bold 15px 'Liberation Serif',serif;width:64px"><i style="left:0.25px;">1</i><i style="left:8.25px;">1</i><i style="left:18.12px;">.</i><i style="left:24.25px;">1</i><i style="left:32.25px;">7</i><i style="left:40.25px;">4</i><i style="left:48.25px;transform:scaleX(0.899);">k</i><i style="left:56.25px;transform:scaleX(0.600);">m</i></div>
<div class="mono" style="left:891.00px;top:142.63px;color:#000;font:bold 15px 'Liberation Serif',serif;width:64px"><i style="left:0.25px;">1</i><i style="left:8.25px;">1</i><i style="left:18.12px;">.</i><i style="left:24.25px;">4</i><i style="left:32.25px;">4</i><i style="left:40.25px;">4</i><i style="left:48.25px;transform:scaleX(0.899);">k</i><i style="left:56.25px;transform:scaleX(0.600);">m</i></div>
<div class="mono" style="left:899.00px;top:157.63px;color:#000;font:bold 15px 'Liberation Serif',serif;width:56px"><i style="left:0.25px;">2</i><i style="left:8.25px;">3</i><i style="left:18.12px;">.</i><i style="left:24.25px;">5</i><i style="left:32.25px;">5</i><i style="left:40.25px;">2</i><i style="left:48.25px;transform:scaleX(0.600);">m</i></div>
<div class="mono" style="left:893.00px;top:172.63px;color:#000;font:bold 15px 'Liberation Serif',serif;width:62px"><i style="left:0.25px;">2</i><i style="left:8.25px;">9</i><i style="left:16.25px;">5</i><i style="left:26.12px;">.</i><i style="left:32.25px;">8</i><i style="left:40.25px;">2</i><i style="left:48.50px;">°</i></div>
<div class="mono" style="left:893.00px;top:187.63px;color:#000;font:bold 15px 'Liberation Serif',serif;width:62px"><i style="left:0.75px;transform:scaleX(1.300);">-</i><i style="left:8.25px;">8</i><i style="left:16.25px;">3</i><i style="left:26.12px;">.</i><i style="left:32.25px;">2</i><i style="left:40.25px;">1</i><i style="left:48.50px;">°</i></div>
<div class="mono" style="left:901.00px;top:202.63px;color:#000;font:bold 15px 'Liberation Serif',serif;width:54px"><i style="left:0.25px;">8</i><i style="left:8.25px;">3</i><i style="left:18.12px;">.</i><i style="left:24.25px;">2</i><i style="left:32.25px;">1</i><i style="left:40.50px;">°</i></div>
<div class="mono" style="left:931.00px;top:217.63px;color:#000;font:bold 15px 'Liberation Serif',serif;width:24px"><i style="left:0.75px;transform:scaleX(1.300);">-</i><i style="left:8.25px;">0</i><i style="left:16.25px;transform:scaleX(0.600);">m</i></div>
<div class="mono" style="left:897.00px;top:232.63px;color:#000;font:bold 15px 'Liberation Serif',serif;width:58px"><i style="left:0.25px;">0</i><i style="left:8.25px;">6</i><i style="left:16.25px;transform:scaleX(0.901);">:</i><i style="left:21.25px;">1</i><i style="left:29.25px;">5</i><i style="left:37.25px;transform:scaleX(0.901);">:</i><i style="left:42.25px;">4</i><i style="left:50.25px;">8</i></div>
<div class="mono" style="left:834.00px;top:247.63px;color:#000;font:bold 15px 'Liberation Serif',serif;width:5.5px"><i style="left:0.25px;">(</i></div>
<div class="mono" style="left:839.50px;top:247.63px;color:#000;font:bold 15px 'Liberation Serif',serif;width:7px"><i style="left:0.25px;transform:scaleX(0.760);">+</i></div>
<div class="mono" style="left:846.50px;top:247.63px;color:#000;font:bold 15px 'Liberation Serif',serif;width:5.5px"><i style="left:0.25px;">)</i></div>
<div class="mono" style="left:891.00px;top:247.63px;color:#000;font:bold 15px 'Liberation Serif',serif;width:64px"><i style="left:0.25px;">8</i><i style="left:8.25px;">9</i><i style="left:16.25px;">3</i><i style="left:26.12px;">.</i><i style="left:32.25px;">5</i><i style="left:40.25px;">4</i><i style="left:48.25px;">6</i><i style="left:56.25px;transform:scaleX(0.600);">m</i></div>
<div class="mono" style="left:834.00px;top:262.63px;color:#000;font:bold 15px 'Liberation Serif',serif;width:5.5px"><i style="left:0.25px;">(</i></div>
<div class="mono" style="left:839.50px;top:262.63px;color:#000;font:bold 15px 'Liberation Serif',serif;width:7px"><i style="left:0.25px;transform:scaleX(1.300);">-</i></div>
<div class="mono" style="left:846.50px;top:262.63px;color:#000;font:bold 15px 'Liberation Serif',serif;width:5.5px"><i style="left:0.25px;">)</i></div>
<div class="mono" style="left:883.00px;top:262.63px;color:#000;font:bold 15px 'Liberation Serif',serif;width:72px"><i style="left:0.75px;transform:scaleX(1.300);">-</i><i style="left:8.25px;">8</i><i style="left:16.25px;">6</i><i style="left:24.25px;">9</i><i style="left:34.12px;">.</i><i style="left:40.25px;">9</i><i style="left:48.25px;">9</i><i style="left:56.25px;">4</i><i style="left:64.25px;transform:scaleX(0.600);">m</i></div>
<div class="mono" style="left:899.00px;top:277.63px;color:#000;font:bold 15px 'Liberation Serif',serif;width:56px"><i style="left:0.25px;">1</i><i style="left:10.12px;">.</i><i style="left:16.25px;">8</i><i style="left:24.25px;transform:scaleX(0.899);">k</i><i style="left:32.25px;transform:scaleX(0.600);">m</i><i style="left:41.92px;">/</i><i style="left:48.25px;transform:scaleX(0.899);">h</i></div>
<div class="mono" style="left:891.00px;top:320.63px;color:#000;font:bold 15px 'Liberation Serif',serif;width:64px"><i style="left:0.25px;">1</i><i style="left:8.25px;">1</i><i style="left:18.12px;">.</i><i style="left:24.25px;">1</i><i style="left:32.25px;">7</i><i style="left:40.25px;">4</i><i style="left:48.25px;transform:scaleX(0.899);">k</i><i style="left:56.25px;transform:scaleX(0.600);">m</i></div>
<div class="mono" style="left:891.00px;top:335.63px;color:#000;font:bold 15px 'Liberation Serif',serif;width:64px"><i style="left:0.25px;">1</i><i style="left:8.25px;">1</i><i style="left:18.12px;">.</i><i style="left:24.25px;">4</i><i style="left:32.25px;">4</i><i style="left:40.25px;">0</i><i style="left:48.25px;transform:scaleX(0.899);">k</i><i style="left:56.25px;transform:scaleX(0.600);">m</i></div>
<div class="mono" style="left:899.00px;top:350.63px;color:#000;font:bold 15px 'Liberation Serif',serif;width:56px"><i style="left:0.25px;">2</i><i style="left:8.25px;">3</i><i style="left:18.12px;">.</i><i style="left:24.25px;">5</i><i style="left:32.25px;">5</i><i style="left:40.25px;">2</i><i style="left:48.25px;transform:scaleX(0.600);">m</i></div>
<div class="mono" style="left:893.00px;top:365.63px;color:#000;font:bold 15px 'Liberation Serif',serif;width:62px"><i style="left:0.25px;">2</i><i style="left:8.25px;">9</i><i style="left:16.25px;">5</i><i style="left:26.12px;">.</i><i style="left:32.25px;">8</i><i style="left:40.25px;">2</i><i style="left:48.50px;">°</i></div>
<div class="mono" style="left:893.00px;top:380.63px;color:#000;font:bold 15px 'Liberation Serif',serif;width:62px"><i style="left:0.75px;transform:scaleX(1.300);">-</i><i style="left:8.25px;">8</i><i style="left:16.25px;">3</i><i style="left:26.12px;">.</i><i style="left:32.25px;">2</i><i style="left:40.25px;">1</i><i style="left:48.50px;">°</i></div>
<div class="mono" style="left:901.00px;top:395.63px;color:#000;font:bold 15px 'Liberation Serif',serif;width:54px"><i style="left:0.25px;">8</i><i style="left:8.25px;">3</i><i style="left:18.12px;">.</i><i style="left:24.25px;">2</i><i style="left:32.25px;">1</i><i style="left:40.50px;">°</i></div>
<div class="mono" style="left:931.00px;top:410.63px;color:#000;font:bold 15px 'Liberation Serif',serif;width:24px"><i style="left:0.75px;transform:scaleX(1.300);">-</i><i style="left:8.25px;">0</i><i style="left:16.25px;transform:scaleX(0.600);">m</i></div>
<div class="mono" style="left:897.00px;top:425.63px;color:#000;font:bold 15px 'Liberation Serif',serif;width:58px"><i style="left:0.25px;">0</i><i style="left:8.25px;">4</i><i style="left:16.25px;transform:scaleX(0.901);">:</i><i style="left:21.25px;">0</i><i style="left:29.25px;">9</i><i style="left:37.25px;transform:scaleX(0.901);">:</i><i style="left:42.25px;">0</i><i style="left:50.25px;">2</i></div>
<div class="mono" style="left:834.00px;top:440.63px;color:#000;font:bold 15px 'Liberation Serif',serif;width:5.5px"><i style="left:0.25px;">(</i></div>
<div class="mono" style="left:839.50px;top:440.63px;color:#000;font:bold 15px 'Liberation Serif',serif;width:7px"><i style="left:0.25px;transform:scaleX(0.760);">+</i></div>
<div class="mono" style="left:846.50px;top:440.63px;color:#000;font:bold 15px 'Liberation Serif',serif;width:5.5px"><i style="left:0.25px;">)</i></div>
<div class="mono" style="left:891.00px;top:440.63px;color:#000;font:bold 15px 'Liberation Serif',serif;width:64px"><i style="left:0.25px;">9</i><i style="left:8.25px;">2</i><i style="left:16.25px;">3</i><i style="left:26.12px;">.</i><i style="left:32.25px;">6</i><i style="left:40.25px;">6</i><i style="left:48.25px;">4</i><i style="left:56.25px;transform:scaleX(0.600);">m</i></div>
<div class="mono" style="left:834.00px;top:455.63px;color:#000;font:bold 15px 'Liberation Serif',serif;width:5.5px"><i style="left:0.25px;">(</i></div>
<div class="mono" style="left:839.50px;top:455.63px;color:#000;font:bold 15px 'Liberation Serif',serif;width:7px"><i style="left:0.25px;transform:scaleX(1.300);">-</i></div>
<div class="mono" style="left:846.50px;top:455.63px;color:#000;font:bold 15px 'Liberation Serif',serif;width:5.5px"><i style="left:0.25px;">)</i></div>
<div class="mono" style="left:883.00px;top:455.63px;color:#000;font:bold 15px 'Liberation Serif',serif;width:72px"><i style="left:0.75px;transform:scaleX(1.300);">-</i><i style="left:8.25px;">9</i><i style="left:16.25px;">2</i><i style="left:24.25px;">3</i><i style="left:34.12px;">.</i><i style="left:40.25px;">5</i><i style="left:48.25px;">6</i><i style="left:56.25px;">5</i><i style="left:64.25px;transform:scaleX(0.600);">m</i></div>
</body></html>
